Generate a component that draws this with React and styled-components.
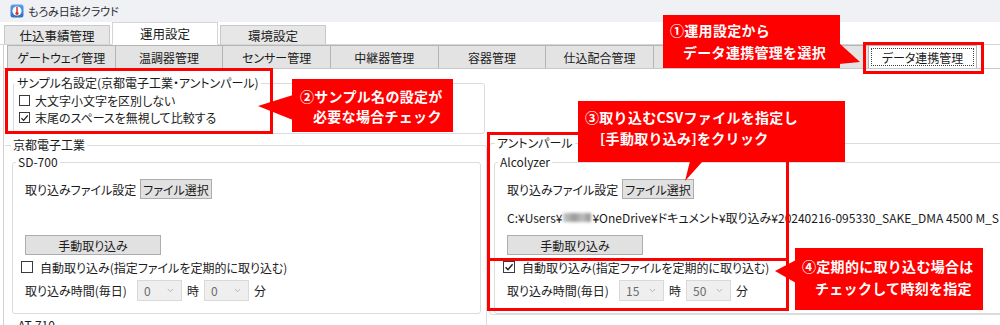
import React from 'react';
import styled, { createGlobalStyle } from 'styled-components';

const GlobalStyle = createGlobalStyle`
  html, body { margin: 0; padding: 0; background: #fff; }
  body {
    font-family: "Noto Sans CJK JP", "Noto Sans", sans-serif;
    font-size: 12px;
    color: #1b1b1b;
  }
  *, *::before, *::after { box-sizing: border-box; }
`;

const Window = styled.div`
  position: relative;
  width: 1000px;
  height: 325px;
  overflow: hidden;
  background: #fff;
  font-feature-settings: "palt" 1;
`;

const TitleBar = styled.div`
  height: 22px;
  background: #eff1f5;
  display: flex;
  align-items: center;
  gap: 4px;
  padding-left: 10px;
  font-size: 11px;
  color: #2b2b2b;
`;

const MainTabBar = styled.div`
  height: 23px;
  display: flex;
  align-items: flex-end;
  padding-left: 4px;
  border-bottom: 1px solid #d5d5d5;
`;

const MainTab = styled.div`
  width: 106px;
  height: ${p => (p.$active ? 23 : 19)}px;
  margin-right: 2px;
  margin-bottom: ${p => (p.$active ? '-1px' : '0')};
  display: flex;
  align-items: center;
  justify-content: center;
  background: ${p => (p.$active ? '#fff' : '#e7e7e7')};
  border: 1px solid ${p => (p.$active ? '#d5d5d5' : '#c8c8c8')};
  border-bottom: ${p => (p.$active ? '1px solid #fff' : '0')};
  font-size: 12.5px;
  font-feature-settings: normal;
`;

const Page = styled.div`
  margin-left: 3px;
  border-left: 1px solid #d0d0d0;
  display: flex;
  flex-direction: column;
`;

const SubTabBar = styled.div`
  height: 24px;
  display: flex;
  padding-left: 3px;
  border-bottom: 1px solid #c9c9c9;
`;

const SubTab = styled.div`
  flex: 0 0 108.67px;
  height: 23px;
  margin-left: ${p => (p.$first ? '0' : '-1px')};
  display: flex;
  align-items: stretch;
  padding: 2px;
  background: ${p => (p.$active ? '#fff' : '#e3e3e3')};
  border: 1px solid #b5b5b5;
  border-bottom: 0;
  font-size: 12px;
`;

const SubTabLabel = styled.span`
  flex: 1;
  display: flex;
  align-items: center;
  justify-content: center;
  border: 1px dotted ${p => (p.$focus ? '#444' : 'transparent')};
`;

const Body = styled.div`
  display: flex;
  flex-direction: column;
`;

const GroupBox = styled.fieldset`
  margin: ${p => p.$m || '0'};
  padding: 0;
  min-width: 0;
  width: ${p => (p.$w ? `${p.$w}px` : 'auto')};
  border: 1px solid #dcdcdc;
  border-radius: 3px;
  ${p => p.$noLeft && 'border-left-color: transparent;'}
`;

const Legend = styled.legend`
  padding: 0 2px;
  margin-left: ${p => p.$ml || 1}px;
  font-size: 12px;
  line-height: 16px;
  color: #1b1b1b;
`;

const SampleBody = styled.div`
  padding: 1px 0 7px 5px;
  display: flex;
  flex-direction: column;
`;

const CheckRow = styled.label`
  height: ${p => p.$h || 17}px;
  display: flex;
  align-items: center;
  gap: ${p => p.$gap || 5}px;
  margin-left: ${p => p.$ml || 0}px;
  white-space: nowrap;
`;

const CheckBox = styled.span`
  width: ${p => p.$s}px;
  height: ${p => p.$s}px;
  flex: none;
  border: 1px solid #3a3a3a;
  background: #fff;
  display: inline-flex;
  align-items: center;
  justify-content: center;
`;

const Columns = styled.div`
  display: flex;
  align-items: flex-start;
  gap: 2px;
  margin-top: 1px;
`;

const Column = styled.div`
  flex: none;
  width: ${p => p.$w}px;
  margin-top: ${p => p.$mt || 0}px;
  display: flex;
  flex-direction: column;
`;

const DeviceBody = styled.div`
  padding: 9px 0 12px 12px;
  display: flex;
  flex-direction: column;
`;

const EmptyBody = styled.div`
  height: 40px;
`;

const Row = styled.div`
  height: ${p => p.$h}px;
  display: flex;
  align-items: center;
  gap: ${p => p.$gap || 0}px;
  white-space: nowrap;
`;

const FieldLabel = styled.span`
  width: ${p => p.$w}px;
  flex: none;
`;

const Button = styled.div`
  width: ${p => p.$w}px;
  height: 20px;
  flex: none;
  background: #e1e1e1;
  border: 1px solid #adadad;
  display: flex;
  align-items: center;
  justify-content: center;
  font-size: 12px;
  color: #1b1b1b;
`;

const PathRow = styled.div`
  height: 36px;
  display: flex;
  align-items: center;
  white-space: nowrap;
  overflow: hidden;
`;

const Blurred = styled.span`
  display: inline-block;
  width: 28px;
  height: 9px;
  margin: 0 1px;
  background: linear-gradient(90deg, #c9c9c9, #9a9a9a 40%, #bdbdbd 70%, #8f8f8f);
  filter: blur(1.4px);
  vertical-align: middle;
`;

const Combo = styled.div`
  width: 45px;
  height: 21px;
  flex: none;
  background: #efefef;
  border: 1px solid #d9d9d9;
  display: flex;
  align-items: center;
  justify-content: space-between;
  padding: 0 7px 0 6px;
  color: #6a6a6a;
  font-size: 12px;
`;

const Unit = styled.span``;

const Highlight = styled.div`
  position: absolute;
  left: ${p => p.$x}px;
  top: ${p => p.$y}px;
  width: ${p => p.$w}px;
  height: ${p => p.$h}px;
  border: 3px solid #ff0000;
  pointer-events: none;
`;

const Callout = styled.div`
  position: absolute;
  left: ${p => p.$x}px;
  top: ${p => p.$y}px;
  width: ${p => p.$w}px;
  height: ${p => p.$h}px;
  background: #ff0000;
  color: #fff;
  font-weight: 700;
  font-size: 14px;
  letter-spacing: 0.3px;
  line-height: ${p => p.$lh}px;
  padding: ${p => p.$pt}px 0 0 ${p => p.$pl}px;
  font-feature-settings: normal;
  white-space: nowrap;
`;

const CalloutLine = styled.div`
  padding-left: ${p => p.$indent || 0}px;
`;

const Pointer = styled.span`
  position: absolute;
  left: ${p => p.$x}px;
  top: ${p => p.$y}px;
  width: ${p => p.$w}px;
  height: ${p => p.$h}px;
  background: #ff0000;
  clip-path: ${p => p.$poly};
`;

const AppIcon = () => (
  <svg width="14" height="14" viewBox="0 0 14 14">
    <defs>
      <linearGradient id="ig" x1="0" y1="0" x2="0" y2="1">
        <stop offset="0" stopColor="#5aa0ea" />
        <stop offset="1" stopColor="#2d6fc4" />
      </linearGradient>
    </defs>
    <rect x="0.5" y="0.5" width="13" height="13" rx="2.5" fill="url(#ig)" />
    <circle cx="7" cy="7" r="4.6" fill="#fff" />
    <line x1="7" y1="3.4" x2="7" y2="8.6" stroke="#d8322c" strokeWidth="1.5" strokeLinecap="round" />
    <circle cx="7" cy="9.3" r="1.6" fill="#d8322c" />
  </svg>
);

const Check = () => (
  <svg width="10" height="10" viewBox="0 0 10 10">
    <path d="M1.6 5.2 L4 7.6 L8.6 2.2" fill="none" stroke="#222" strokeWidth="1.4" />
  </svg>
);

const Chevron = () => (
  <svg width="7" height="5" viewBox="0 0 7 5">
    <path d="M0.8 1 L3.5 3.7 L6.2 1" fill="none" stroke="#b5b5b5" strokeWidth="1" />
  </svg>
);

const subTabs = [
  'ゲートウェイ管理',
  '温調器管理',
  'センサー管理',
  '中継器管理',
  '容器管理',
  '仕込配合管理',
  '',
  '',
  'データ連携管理',
];

function DeviceSettings({ path, auto, hour, minute }) {
  return (
    <DeviceBody>
      <Row $h={20}>
        <FieldLabel $w={115}>取り込みファイル設定</FieldLabel>
        <Button $w={72}>ファイル選択</Button>
      </Row>
      <PathRow>
        {path && (
          <>
            C:¥Users¥<Blurred />¥OneDrive¥ドキュメント¥取り込み¥20240216-095330_SAKE_DMA 4500 M_S
          </>
        )}
      </PathRow>
      <Row $h={20}>
        <Button $w={136}>手動取り込み</Button>
      </Row>
      <CheckRow $h={24} $gap={7} $ml={-4}>
        <CheckBox $s={12}>{auto && <Check />}</CheckBox>
        自動取り込み(指定ファイルを定期的に取り込む)
      </CheckRow>
      <Row $h={22} $gap={5}>
        <FieldLabel $w={107}>取り込み時間(毎日)</FieldLabel>
        <Combo>
          <span>{hour}</span>
          <Chevron />
        </Combo>
        <Unit>時</Unit>
        <Combo>
          <span>{minute}</span>
          <Chevron />
        </Combo>
        <Unit>分</Unit>
      </Row>
    </DeviceBody>
  );
}

export default function App() {
  return (
    <Window>
      <GlobalStyle />
      <TitleBar>
        <AppIcon />
        <span>もろみ日誌クラウド</span>
      </TitleBar>
      <MainTabBar>
        <MainTab>仕込事績管理</MainTab>
        <MainTab $active>運用設定</MainTab>
        <MainTab>環境設定</MainTab>
      </MainTabBar>
      <Page>
        <SubTabBar>
          {subTabs.map((t, i) => (
            <SubTab key={i} $first={i === 0} $active={i === subTabs.length - 1}>
              <SubTabLabel $focus={i === subTabs.length - 1}>{t}</SubTabLabel>
            </SubTab>
          ))}
        </SubTabBar>
        <Body>
          <GroupBox $m="6px 0 0 9px" $w={472}>
            <Legend $ml={1}>サンプル名設定(京都電子工業・アントンパール)</Legend>
            <SampleBody>
              <CheckRow>
                <CheckBox $s={11} />
                大文字小文字を区別しない
              </CheckRow>
              <CheckRow>
                <CheckBox $s={11}>
                  <Check />
                </CheckBox>
                末尾のスペースを無視して比較する
              </CheckRow>
            </SampleBody>
          </GroupBox>
          <Columns>
            <Column $w={483} $mt={2}>
              <GroupBox $noLeft>
                <Legend $ml={6}>京都電子工業</Legend>
                <GroupBox $m="1px 0 0 7px" $w={469}>
                  <Legend $ml={3}>SD-700</Legend>
                  <DeviceSettings hour="0" minute="0" />
                </GroupBox>
                <GroupBox $m="3px 0 0 7px" $w={469}>
                  <Legend $ml={3}>AT-710</Legend>
                  <EmptyBody />
                </GroupBox>
              </GroupBox>
            </Column>
            <Column $w={560}>
              <GroupBox>
                <Legend $ml={5}>アントンパール</Legend>
                <GroupBox $m="3px 0 0 4px" $w={550}>
                  <Legend $ml={3}>Alcolyzer</Legend>
                  <DeviceSettings path auto hour="15" minute="50" />
                </GroupBox>
              </GroupBox>
            </Column>
          </Columns>
        </Body>
      </Page>

      <Highlight $x={863} $y={42} $w={121} $h={32} />
      <Highlight $x={5} $y={68} $w={268} $h={66} />
      <Highlight $x={487} $y={132} $w={302} $h={129} />
      <Highlight $x={487} $y={258} $w={302} $h={53} />

      <Callout $x={663} $y={15} $w={177} $h={53} $lh={22} $pt={4} $pl={7}>
        <Pointer $x={176} $y={28} $w={21} $h={21} $poly="polygon(0 0, 100% 90%, 0 100%)" />
        <CalloutLine>①運用設定から</CalloutLine>
        <CalloutLine $indent={13}>データ連携管理を選択</CalloutLine>
      </Callout>

      <Callout $x={292} $y={79} $w={161} $h={53} $lh={20} $pt={7} $pl={8}>
        <Pointer $x={-34} $y={16} $w={35} $h={25} $poly="polygon(100% 0, 0 44%, 100% 100%)" />
        <CalloutLine>②サンプル名の設定が</CalloutLine>
        <CalloutLine $indent={13}>必要な場合チェック</CalloutLine>
      </Callout>

      <Callout $x={578} $y={101} $w={267} $h={61} $lh={21} $pt={6} $pl={7}>
        <Pointer $x={107} $y={60} $w={18} $h={20} $poly="polygon(28% 0, 100% 0, 0 100%)" />
        <CalloutLine>③取り込むCSVファイルを指定し</CalloutLine>
        <CalloutLine $indent={15}>[手動取り込み]をクリック</CalloutLine>
      </Callout>

      <Callout $x={795} $y={248} $w={188} $h={62} $lh={22} $pt={7} $pl={7}>
        <Pointer $x={-20} $y={12} $w={21} $h={23} $poly="polygon(100% 0, 0 48%, 100% 100%)" />
        <CalloutLine>④定期的に取り込む場合は</CalloutLine>
        <CalloutLine $indent={13}>チェックして時刻を指定</CalloutLine>
      </Callout>
    </Window>
  );
}
